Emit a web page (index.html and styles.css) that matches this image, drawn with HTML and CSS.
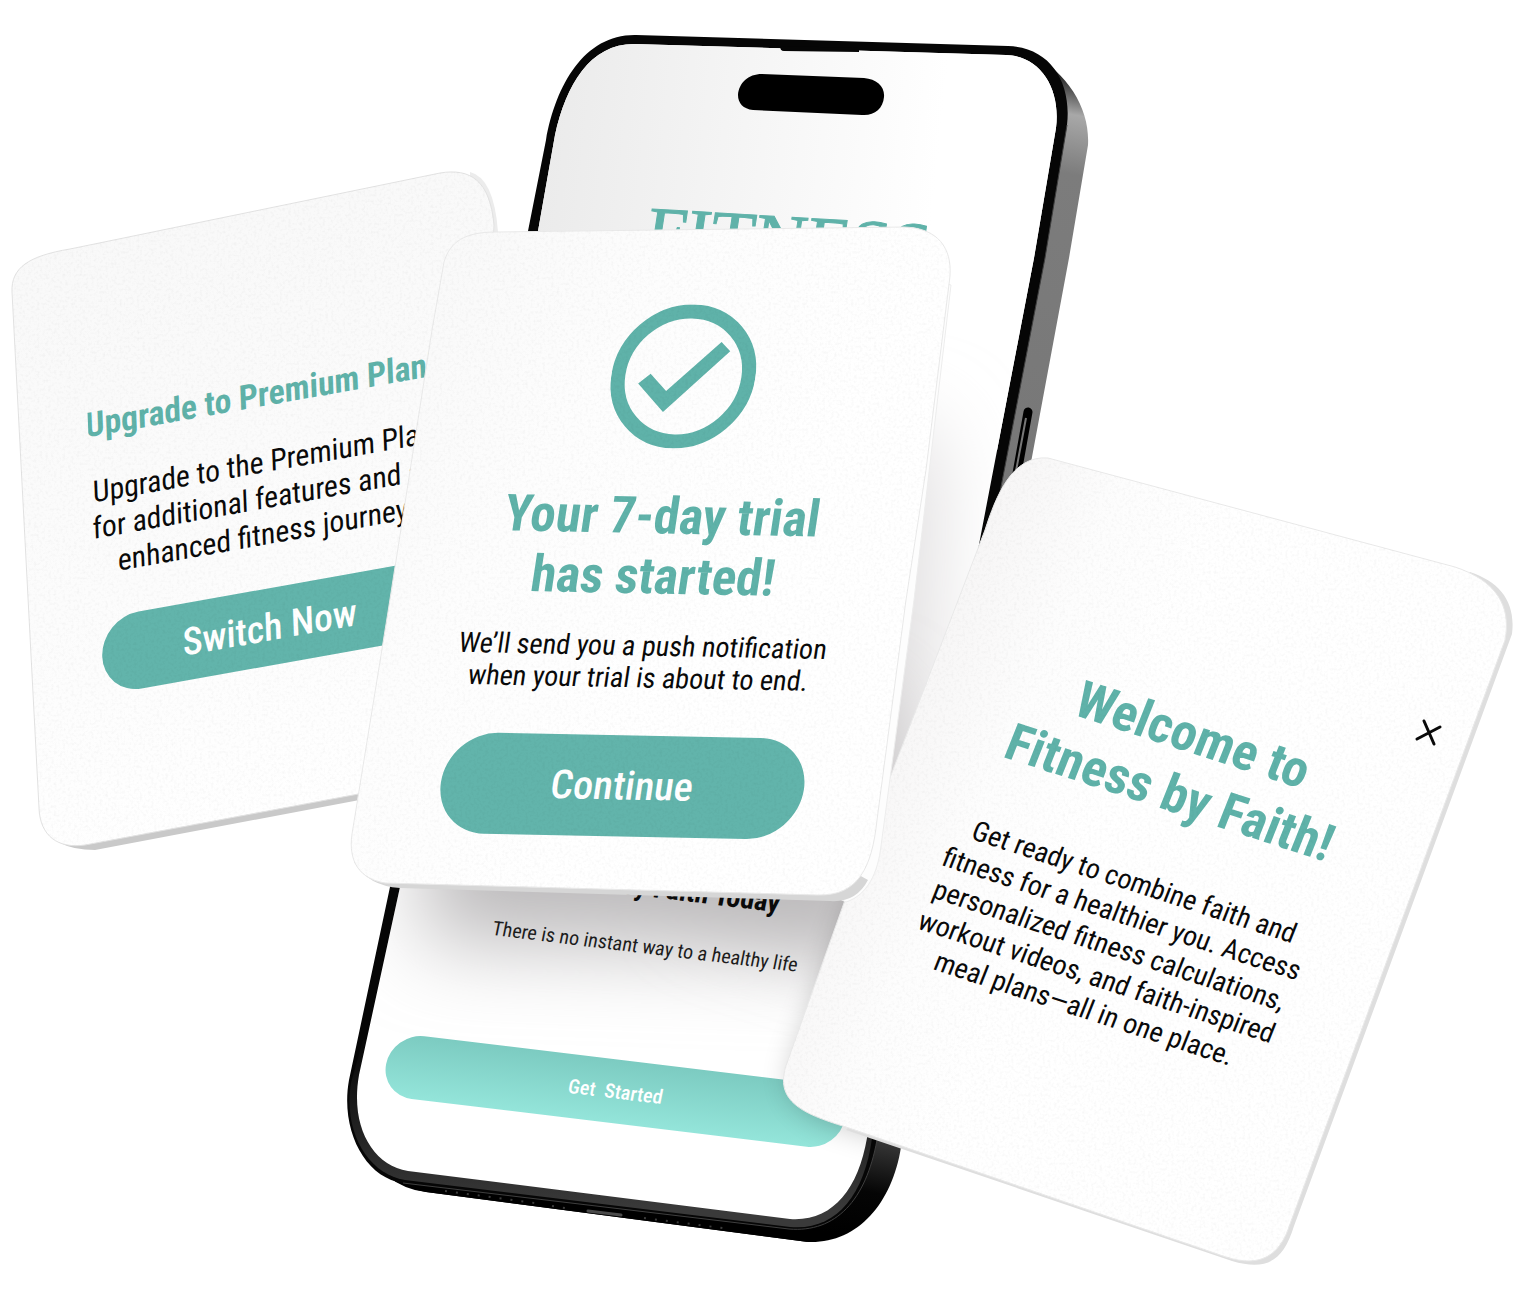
FILE: index.html
```html
<!DOCTYPE html>
<html lang="en">
<head>
<meta charset="utf-8">
<meta name="viewport" content="width=device-width, initial-scale=1">
<title>Fitness by Faith</title>
<link rel="stylesheet" href="styles.css">
</head>
<body>
<main class="stage">
<svg class="scene" viewBox="0 0 1522 1306" xmlns="http://www.w3.org/2000/svg">
  <defs>
    <linearGradient id="screen" x1="540" y1="200" x2="930" y2="240" gradientUnits="userSpaceOnUse">
      <stop offset="0" stop-color="#ebebeb"/><stop offset="0.4" stop-color="#f3f3f3"/><stop offset="1" stop-color="#ffffff"/>
    </linearGradient>
    <linearGradient id="side" x1="1080" y1="80" x2="870" y2="1240" gradientUnits="userSpaceOnUse">
      <stop offset="0" stop-color="#2a2a2a"/><stop offset="0.03" stop-color="#a8a8a8"/><stop offset="0.08" stop-color="#7c7c7c"/>
      <stop offset="0.35" stop-color="#777777"/><stop offset="0.9" stop-color="#484848"/><stop offset="0.96" stop-color="#050505"/><stop offset="1" stop-color="#000000"/>
    </linearGradient>
    <linearGradient id="bezel" x1="0" y1="1050" x2="0" y2="1210" gradientUnits="userSpaceOnUse">
      <stop offset="0" stop-color="#0a0a0a"/><stop offset="1" stop-color="#3a3a3a"/>
    </linearGradient>
    <linearGradient id="paperLeft" x1="0" y1="200" x2="200" y2="850" gradientUnits="userSpaceOnUse">
      <stop offset="0" stop-color="#f8f8f8"/><stop offset="0.6" stop-color="#fcfcfc"/><stop offset="1" stop-color="#ffffff"/>
    </linearGradient>
    <linearGradient id="paperFront" x1="400" y1="240" x2="800" y2="500" gradientUnits="userSpaceOnUse">
      <stop offset="0" stop-color="#f8f8f8"/><stop offset="0.5" stop-color="#fdfdfd"/><stop offset="1" stop-color="#ffffff"/>
    </linearGradient>
    <linearGradient id="paperRight" x1="880" y1="760" x2="1080" y2="850" gradientUnits="userSpaceOnUse">
      <stop offset="0" stop-color="#f7f6f6"/><stop offset="0.5" stop-color="#fdfdfd"/><stop offset="1" stop-color="#ffffff"/>
    </linearGradient>
    <filter id="soft" filterUnits="userSpaceOnUse" x="100" y="100" width="1200" height="1200"><feGaussianBlur stdDeviation="42"/></filter>
    <filter id="near" x="-50%" y="-50%" width="200%" height="200%"><feGaussianBlur stdDeviation="14"/></filter>
    <filter id="grain" x="0" y="0" width="100%" height="100%">
      <feTurbulence type="fractalNoise" baseFrequency="0.35" numOctaves="2" seed="4"/>
      <feColorMatrix values="0 0 0 0 0  0 0 0 0 0  0 0 0 0 0  0.6 0 0 0 -0.26"/>
      <feComposite in2="SourceGraphic" operator="in"/>
    </filter>
    <path id="faceLeft" d="M12 292C11 268 28 256 70 249L440 173C470 168 490 180 494 225L480 500L380 790L85 845C58 849 40 836 39 808Z"/>
    <path id="faceRight" d="M985 530C996 496 1012 455 1048 458L1455 567C1494 580 1512 604 1505 640L1290 1224C1280 1256 1260 1268 1226 1257L846 1127C800 1113 772 1100 788 1060L870 830Z"/>
    <path id="faceFront" d="M444 262C450 242 464 232 496 232L904 227C938 228 952 248 950 276L926 470L906 600L877 820C872 868 858 896 818 895L385 883C360 879 348 862 352 834L388 612L432 330Z"/>
    <clipPath id="screenClip"><path d="M400 887L538 231L555 135C566 85 590 44 634 44L1006 55C1040 56 1061 88 1056 128L1034 258L981 534L867 1138C858 1190 832 1222 790 1219L408 1171C372 1165 350 1126 359 1075Z"/></clipPath>
  </defs>

  <g class="phone">
    <path fill="url(#side)" d="M1030 52C1070 75 1090 110 1088 145L1069 258L1032 457L901 1147C892 1205 856 1244 808 1242L426 1192Q405 1188 387 1176L760 1190L860 1130Z"/>
    <path fill="#000" d="M387 1176Q405 1190 426 1192L808 1242L780 1200L400 1150Z"/>
    <path fill="#060606" d="M390 887L528 231L546 140C556 84 585 34 636 35L1008 46C1050 47 1072 82 1067 125L1045 258L992 534L877 1140C866 1200 836 1233 789 1229L403 1183C365 1178 340 1130 349 1080Z"/>
    <path fill="none" stroke="#3f3f3f" stroke-width="1" d="M1067 125L1045 258L992 534L877 1140C866 1200 836 1233 789 1229L403 1183"/>
    <path fill="url(#bezel)" d="M351 1083L363 1040L872 1138C864 1197 835 1231 790 1227L405 1180C368 1174 343 1132 351 1083Z"/>
    <path fill="none" stroke="#000" stroke-width="9" stroke-linecap="round" d="M1028 412L1014 490"/>
    <path fill="none" stroke="#777" stroke-width="2" d="M1026 418L1012 492"/>
    <g clip-path="url(#screenClip)">
      <rect x="340" y="30" width="760" height="1220" fill="#fff"/>
      <rect x="340" y="30" width="760" height="420" fill="url(#screen)"/>
      <path class="cast-side" filter="url(#soft)" d="M700 420L935 430L930 700L890 960L700 900Z"/>
      <path class="cast" filter="url(#soft)" d="M440 700L880 700L900 955L420 940Z"/>
    </g>
    <path fill="#060606" d="M780 46L859 48L859 52L784 51Q780 51 780 46Z"/>
    <path fill="#000" d="M762 74L864 78C877 79 885 87 884 97C883 109 874 116 862 115L753 110C743 109 738 103 738 95C739 83 748 74 762 74Z"/>
    <path fill="none" stroke="#3c3c3c" stroke-width="2" stroke-dasharray="2 9" d="M445 1191L535 1203M552 1206L565 1208M644 1218L730 1229"/>
    <path fill="none" stroke="#4a4a4a" stroke-width="3" stroke-linecap="round" d="M588 1211L621 1215"/>

    <foreignObject width="300" height="90" transform="matrix(.998 .06 -.15 .99 652 196)">
      <p class="brand">FITNESS</p>
    </foreignObject>
    <foreignObject width="466" height="270" transform="matrix(.993 .12 -.2 .98 429 844)">
      <section class="intro">
        <h2 class="intro-title">Fitness by Faith Today</h2>
        <p class="intro-text">There is no instant way to a healthy life</p>
        <button class="pill pill-start" type="button">Get&nbsp; Started</button>
      </section>
    </foreignObject>
    <g clip-path="url(#screenClip)"><path class="cast-near" filter="url(#near)" d="M872 840L792 1060C782 1090 795 1108 825 1122L950 1160L1000 700Z"/></g>
  </g>

  <g class="card-left">
    <path fill="#c9c9c9" d="M42 822Q52 850 95 850L370 798V780Z"/>
    <path fill="#ececec" d="M470 172Q494 178 498 232V300H470Z"/>
    <use href="#faceLeft" fill="url(#paperLeft)" stroke="#e2e2e2"/>
    <foreignObject width="350" height="310" transform="matrix(.985 -.175 .04 1 87 400)">
      <section class="upgrade">
        <h2 class="upgrade-title">Upgrade to Premium Plan!</h2>
        <p class="upgrade-text">Upgrade to the Premium Plan<br>for additional features and an<br>enhanced fitness journey.</p>
        <button class="pill pill-switch" type="button">Switch Now</button>
      </section>
    </foreignObject>
    <use class="paper" href="#faceLeft" filter="url(#grain)"/>
  </g>

  <g class="card-right">
    <path fill="#dedede" d="M1470 572C1500 582 1516 602 1512 634L1294 1226C1283 1262 1266 1271 1232 1261L846 1130Z"/>
    <use href="#faceRight" fill="url(#paperRight)" stroke="#e9e9e9"/>
    <foreignObject width="400" height="360" transform="matrix(.951 .309 -.37 .93 1014 645)">
      <section class="welcome">
        <h2 class="welcome-title">Welcome to<br>Fitness by Faith!</h2>
        <p class="welcome-text">Get ready to combine faith and<br>fitness for a healthier you. Access<br>personalized fitness calculations,<br>workout videos, and faith-inspired<br>meal plans—all in one place.</p>
      </section>
    </foreignObject>
    <foreignObject x="1412" y="717" width="32" height="32">
      <button class="close" type="button" aria-label="Close">
        <svg viewBox="0 0 32 32" width="32" height="32"><path fill="none" stroke="#0a0a0a" stroke-width="3" stroke-linecap="round" d="M12 4L22 27M5 22L28 10"/></svg>
      </button>
    </foreignObject>
    <use class="paper" href="#faceRight" filter="url(#grain)"/>
  </g>

  <g class="card-front">
    <path fill="#fdfdfd" stroke="#ededed" d="M951 285L914 600L881 846C878 872 868 895 846 902L820 890L935 280Z"/>
    <path fill="#d6d6d6" d="M354 862Q368 886 400 888L830 901Q856 903 868 880L850 870Z"/>
    <use href="#faceFront" fill="url(#paperFront)" stroke="#e9e9e9"/>
    <foreignObject width="440" height="570" transform="matrix(1 .02 -.15 1 477 281)">
      <section class="trial">
        <svg class="trial-icon" viewBox="0 0 144 144" width="144" height="144">
          <circle cx="72" cy="72" r="65" fill="none" stroke="#5fb2a9" stroke-width="14"/>
          <path fill="#5fb2a9" d="M28 80L39 70L57 87L105 37L115 46L57 108Z"/>
        </svg>
        <h2 class="trial-title">Your 7-day trial<br>has started!</h2>
        <p class="trial-text">We’ll send you a push notification<br>when your trial is about to end.</p>
        <button class="pill pill-continue" type="button">Continue</button>
      </section>
    </foreignObject>
    <use class="paper" href="#faceFront" filter="url(#grain)"/>
  </g>
</svg>
</main>
</body>
</html>
```
FILE: styles.css
```css
* { box-sizing: border-box; }

body {
  margin: 0;
  background: #fff;
  color: #0a0a0a;
  font-family: "Roboto Condensed", "Liberation Sans Narrow", Roboto, sans-serif;
}

h2, p { margin: 0; white-space: nowrap; }

.scene { display: block; width: 100%; height: auto; }

.cast { fill: #bcbabb; }
.cast-side { fill: #dedcdd; }
.cast-near { fill: #000; opacity: 0.2; }
.paper { opacity: 0.12; pointer-events: none; }

.intro, .upgrade, .welcome, .trial {
  display: flex;
  flex-direction: column;
  align-items: center;
  text-align: center;
}

.pill {
  display: flex;
  align-items: center;
  justify-content: center;
  padding: 0;
  border: 0;
  border-radius: 52px;
  background: #62b4ab;
  color: #fff;
  font-family: inherit;
  font-size: 40px;
  font-weight: 500;
  cursor: pointer;
}

/* phone screen */
.brand {
  color: #5fb2a9;
  font: 72px/72px "Liberation Serif", serif;
  -webkit-text-stroke: 1px #5fb2a9;
}
.intro-title { font-size: 28px; line-height: 34px; }
.intro-text { margin-top: 28px; font-size: 20px; line-height: 28px; color: #1c1c1c; }
.pill-start {
  width: 462px;
  height: 64px;
  margin-top: 102px;
  background: linear-gradient(#7ccbc1, #94e5da);
  font-size: 20px;
}

/* premium card */
.upgrade { padding-top: 5px; }
.upgrade-title { color: #5fb2a9; font-size: 34px; line-height: 40px; }
.upgrade-text { margin-top: 30px; font-size: 30px; line-height: 36px; }
.pill-switch { width: 340px; height: 77px; margin-top: 36px; font-size: 38px; }

/* welcome card */
.welcome-title { color: #5fb2a9; font-size: 52px; line-height: 62px; }
.welcome-text { margin-top: 48px; font-size: 28px; line-height: 34px; }
.close {
  display: block;
  width: 32px;
  height: 32px;
  padding: 0;
  border: 0;
  background: none;
  cursor: pointer;
}
.close svg { display: block; }

/* trial card */
.trial { padding-top: 19px; }
.trial-icon { display: block; }
.trial-title { margin-top: 38px; color: #5fb2a9; font-size: 51px; line-height: 60px; }
.trial-text { margin-top: 24px; font-size: 28px; line-height: 32px; }
.pill-continue { width: 363px; height: 101px; margin-top: 41px; }
```
